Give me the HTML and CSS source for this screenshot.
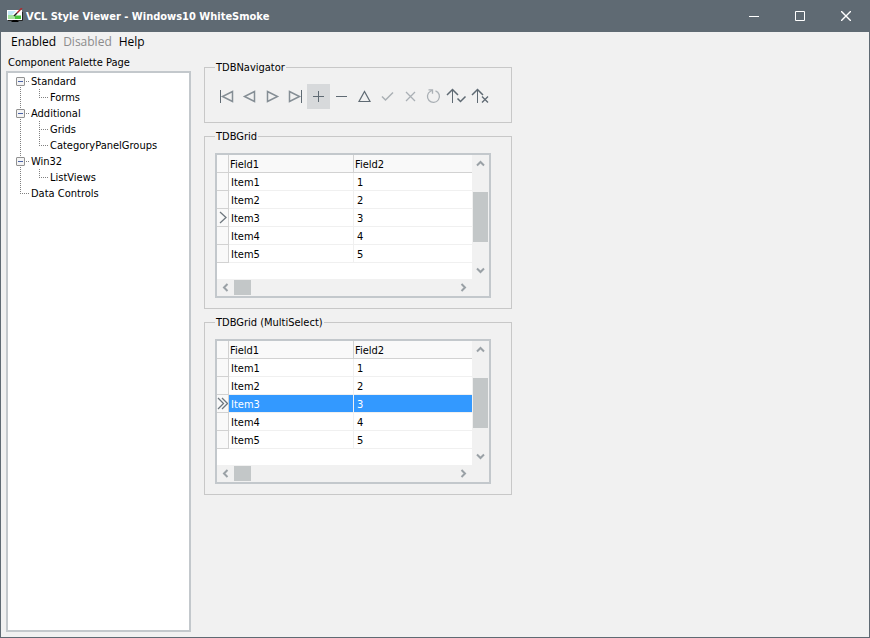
FILE: index.html
```html
<!DOCTYPE html>
<html lang="en">

<head>
    <meta charset="UTF-8">
    <meta name="viewport" content="width=device-width, initial-scale=1.0">
    <title>VCL Style Viewer - Windows10 WhiteSmoke</title>
    <link rel="stylesheet" href="styles.css">
</head>

<body>
    <div class="window">
        <header class="titlebar">
            <svg class="app-icon" width="16" height="16" viewBox="0 0 16 16">
                <path d="M0 2h15v10H0z" fill="#fff"/>
                <path d="M1 3h8L5 7H1z" fill="#c4e8f8"/>
                <path d="M1 7h13v4H1z" fill="#a5e39d"/>
                <path d="M8 8h6v3H8z" fill="#49c43d"/>
                <path d="M15.500 4v8.500H1" fill="none" stroke="#222"/>
                <path d="M6 12h4l2 2H4z" fill="#000"/>
                <path d="M10 5l5-5" stroke="#b3282d" stroke-width="1.500"/>
                <path d="M7 8l3-3" stroke="#222" stroke-width="1.500"/>
            </svg>
            <h1>VCL Style Viewer - Windows10 WhiteSmoke</h1>
            <div class="window-buttons">
                <button type="button" aria-label="Minimize"><svg width="10" height="10" viewBox="0 0 10 10"><path d="M0 5.500h10"/></svg></button>
                <button type="button" aria-label="Maximize"><svg width="10" height="10" viewBox="0 0 10 10"><path d="M.5.5h9v9h-9z"/></svg></button>
                <button type="button" aria-label="Close"><svg width="10" height="10" viewBox="0 0 10 10"><path stroke-width="1.400" d="M0 0l10 10M10 0L0 10"/></svg></button>
            </div>
        </header>

        <nav class="menu">
            <button type="button">Enabled</button>
            <button type="button" disabled>Disabled</button>
            <button type="button">Help</button>
        </nav>

        <main class="content">
            <section class="palette">
                <h2 id="palette-label">Component Palette Page</h2>
                <ul class="tree" aria-labelledby="palette-label">
                    <li>
                        <div class="node"><span class="branch"><button type="button" class="toggle" aria-label="Collapse Standard"></button></span>Standard</div>
                        <ul>
                            <li><div class="node"><span class="branch end"></span>Forms</div></li>
                        </ul>
                    </li>
                    <li>
                        <div class="node"><span class="branch"><button type="button" class="toggle" aria-label="Collapse Additional"></button></span>Additional</div>
                        <ul>
                            <li><div class="node"><span class="branch"></span>Grids</div></li>
                            <li><div class="node"><span class="branch end"></span>CategoryPanelGroups</div></li>
                        </ul>
                    </li>
                    <li>
                        <div class="node"><span class="branch"><button type="button" class="toggle" aria-label="Collapse Win32"></button></span>Win32</div>
                        <ul>
                            <li><div class="node"><span class="branch end"></span>ListViews</div></li>
                        </ul>
                    </li>
                    <li>
                        <div class="node"><span class="branch end"></span>Data Controls</div>
                    </li>
                </ul>
            </section>

            <section class="groups">
                <fieldset>
                    <legend>TDBNavigator</legend>
                    <div class="navigator">
                        <button type="button" aria-label="First"><svg viewBox="0 0 23 25"><path d="M5.500 6v13"/><path class="soft" d="M17.500 7.500v10l-10-5z"/></svg></button>
                        <button type="button" aria-label="Prior"><svg viewBox="0 0 23 25"><path class="soft" d="M16.500 7.500v10l-10-5z"/></svg></button>
                        <button type="button" aria-label="Next"><svg viewBox="0 0 23 25"><path class="soft" d="M6.500 7.500v10l10-5z"/></svg></button>
                        <button type="button" aria-label="Last"><svg viewBox="0 0 23 25"><path class="soft" d="M5.500 7.500v10l10-5z"/><path d="M17.500 6v13"/></svg></button>
                        <button type="button" aria-label="Insert" class="hot"><svg viewBox="0 0 23 25"><path d="M6 12.500h11M11.500 7v11"/></svg></button>
                        <button type="button" aria-label="Delete"><svg viewBox="0 0 23 25"><path d="M6 12.500h11"/></svg></button>
                        <button type="button" aria-label="Edit"><svg viewBox="0 0 23 25"><path stroke-width="1.200" d="M6 17.500h11l-5.500-10z"/></svg></button>
                        <button type="button" aria-label="Post" disabled><svg viewBox="0 0 23 25"><path stroke-width="1.500" d="M6 12.500l3.500 3.500L17 8.500"/></svg></button>
                        <button type="button" aria-label="Cancel" disabled><svg viewBox="0 0 23 25"><path stroke-width="1.300" d="M7 8l9 9M16 8l-9 9"/></svg></button>
                        <button type="button" aria-label="Refresh" disabled><svg viewBox="0 0 23 25"><path stroke-width="1.300" d="M13.500 6.800a6 6 0 1 1-5 .4l1.500-.7"/><path stroke-width="1.300" d="M6.500 5.800h4v4"/></svg></button>
                        <button type="button" aria-label="Apply updates"><svg viewBox="0 0 23 25"><path d="M7.500 6v13"/><path stroke-width="1.500" d="M2 11l5.500-5.500L13 11M12.500 14.500L15.500 17.500l5-5"/></svg></button>
                        <button type="button" aria-label="Cancel updates"><svg viewBox="0 0 23 25"><path d="M9.500 6v13"/><path stroke-width="1.500" d="M4 11l5.500-5.500L15 11"/><path stroke-width="1.300" d="M14 12.500l6 6M20 12.500l-6 6"/></svg></button>
                    </div>
                </fieldset>

                <fieldset>
                    <legend>TDBGrid</legend>
                    <div class="dbgrid">
                        <table>
                            <thead>
                                <tr><td class="indicator"></td><th class="field1">Field1</th><th>Field2</th></tr>
                            </thead>
                            <tbody>
                                <tr><td class="indicator"></td><td>Item1</td><td>1</td></tr>
                                <tr><td class="indicator"></td><td>Item2</td><td>2</td></tr>
                                <tr><td class="indicator"><svg width="11" height="17" viewBox="0 0 11 17"><path d="M3 3l6 5.500L3 14"/></svg></td><td>Item3</td><td>3</td></tr>
                                <tr><td class="indicator"></td><td>Item4</td><td>4</td></tr>
                                <tr><td class="indicator"></td><td>Item5</td><td>5</td></tr>
                            </tbody>
                        </table>
                        <div class="vscroll">
                            <button type="button" aria-label="Scroll up"><svg width="9" height="9" viewBox="0 0 9 9"><path d="M1 6.500L4.500 3 8 6.500"/></svg></button>
                            <div class="thumb"></div>
                            <button type="button" aria-label="Scroll down"><svg width="9" height="9" viewBox="0 0 9 9"><path d="M1 2.500L4.500 6 8 2.500"/></svg></button>
                        </div>
                        <div class="hscroll">
                            <button type="button" aria-label="Scroll left"><svg width="9" height="9" viewBox="0 0 9 9"><path d="M6.500 1L3 4.500 6.500 8"/></svg></button>
                            <div class="thumb"></div>
                            <button type="button" aria-label="Scroll right"><svg width="9" height="9" viewBox="0 0 9 9"><path d="M2.500 1L6 4.500 2.500 8"/></svg></button>
                        </div>
                    </div>
                </fieldset>

                <fieldset>
                    <legend>TDBGrid (MultiSelect)</legend>
                    <div class="dbgrid">
                        <table>
                            <thead>
                                <tr><td class="indicator"></td><th class="field1">Field1</th><th>Field2</th></tr>
                            </thead>
                            <tbody>
                                <tr><td class="indicator"></td><td>Item1</td><td>1</td></tr>
                                <tr><td class="indicator"></td><td>Item2</td><td>2</td></tr>
                                <tr class="selected"><td class="indicator"><svg width="11" height="17" viewBox="0 0 11 17"><path d="M1 3l5.500 5.500L1 14M5 3l5.500 5.500L5 14"/></svg></td><td>Item3</td><td>3</td></tr>
                                <tr><td class="indicator"></td><td>Item4</td><td>4</td></tr>
                                <tr><td class="indicator"></td><td>Item5</td><td>5</td></tr>
                            </tbody>
                        </table>
                        <div class="vscroll">
                            <button type="button" aria-label="Scroll up"><svg width="9" height="9" viewBox="0 0 9 9"><path d="M1 6.500L4.500 3 8 6.500"/></svg></button>
                            <div class="thumb"></div>
                            <button type="button" aria-label="Scroll down"><svg width="9" height="9" viewBox="0 0 9 9"><path d="M1 2.500L4.500 6 8 2.500"/></svg></button>
                        </div>
                        <div class="hscroll">
                            <button type="button" aria-label="Scroll left"><svg width="9" height="9" viewBox="0 0 9 9"><path d="M6.500 1L3 4.500 6.500 8"/></svg></button>
                            <div class="thumb"></div>
                            <button type="button" aria-label="Scroll right"><svg width="9" height="9" viewBox="0 0 9 9"><path d="M2.500 1L6 4.500 2.500 8"/></svg></button>
                        </div>
                    </div>
                </fieldset>
            </section>
        </main>
    </div>
</body>

</html>
```
FILE: styles.css
```css
* {
    box-sizing: border-box;
}

body {
    margin: 0;
    font-family: "DejaVu Sans Condensed", "DejaVu Sans", sans-serif;
    font-size: 11px;
    line-height: 16px;
    color: #000;
}

button {
    display: flex;
    align-items: center;
    justify-content: center;
    padding: 0;
    border: 0;
    background: none;
    font: inherit;
    color: inherit;
}

svg {
    fill: none;
    stroke-width: 1;
}

.window {
    display: flex;
    flex-direction: column;
    min-height: 100vh;
    border: 1px solid #5f6a73;
    border-top: 0;
    background: #f1f1f1;
}

/* title bar */
.titlebar {
    display: flex;
    align-items: center;
    height: 32px;
    padding-left: 6px;
    background: #5f6a73;
    color: #fff;
}

.titlebar h1 {
    flex: 1;
    margin: 0;
    padding: 2px 0 0 3px;
    font-size: 11px;
    font-weight: bold;
}

.window-buttons {
    display: flex;
}

.window-buttons button {
    width: 46px;
    height: 32px;
}

.window-buttons svg {
    stroke: #fff;
}

/* menu */
.menu {
    display: flex;
    gap: 7px;
    height: 20px;
    padding-left: 10px;
    font-family: "Open Sans", "Noto Sans", sans-serif;
    font-size: 12px;
}

.menu button:disabled {
    color: #8c8c8c;
}

.content {
    flex: 1;
    display: flex;
    gap: 13px;
    padding: 2px 5px 5px;
}

/* component tree */
.palette {
    display: flex;
    flex-direction: column;
    width: 185px;
}

.palette h2 {
    height: 17px;
    margin: 0;
    padding-left: 2px;
    font-size: 11px;
    font-weight: normal;
    line-height: 18px;
}

.tree {
    flex: 1;
    margin: 0;
    padding: 0 4px;
    border: 2px solid #c3c8cc;
    background: #fff;
    list-style: none;
}

.tree ul {
    margin: 0;
    padding-left: 19px;
    list-style: none;
    background: repeating-linear-gradient(to bottom, #808080 0 1px, transparent 1px 2px) 8px 0 / 1px 100% no-repeat;
}

.node {
    display: flex;
    height: 16px;
    line-height: 18px;
    white-space: nowrap;
}

.branch {
    width: 19px;
    padding: 4px 0 0 4px;
    background:
        repeating-linear-gradient(to bottom, #808080 0 1px, transparent 1px 2px) 8px 0 / 1px 16px no-repeat,
        repeating-linear-gradient(to right, #808080 0 1px, transparent 1px 2px) 8px 8px / 9px 1px no-repeat;
}

.branch.end {
    background-size: 1px 8px, 9px 1px;
}

.tree > li:first-child > .node .branch {
    background-position: 8px 8px, 8px 8px;
}

.toggle {
    width: 9px;
    height: 9px;
    border: 1px solid #919191;
    border-radius: 1px;
    background: linear-gradient(#4b63a7, #4b63a7) center / 5px 1px no-repeat, #f4f4f4;
}

/* group boxes */
.groups {
    display: flex;
    flex-direction: column;
    gap: 6px;
    width: 308px;
    padding-top: 6px;
}

fieldset {
    margin: 0;
    padding: 9px 20px 10px 10px;
    border: 1px solid #c8c8c8;
}

legend {
    padding: 0 1px;
    line-height: 15px;
}

.navigator {
    display: grid;
    grid-template-columns: repeat(12, 1fr);
    padding-bottom: 3px;
}

.navigator button {
    height: 25px;
}

.navigator svg {
    width: 23px;
    height: 25px;
    stroke: #5f6a73;
}

.navigator .soft {
    stroke: #858e95;
    stroke-width: 1.5;
}

.navigator button:disabled svg {
    stroke: #aab0b5;
}

.navigator .hot {
    background: #d7d9db;
}

/* data grid */
.dbgrid {
    display: grid;
    grid-template-columns: 1fr 17px;
    grid-template-rows: 124px 17px;
    border: 2px solid #c3c8cc;
    background: #fff;
}

table {
    width: 100%;
    align-self: start;
    border-collapse: separate;
    border-spacing: 0;
    table-layout: fixed;
}

th,
td {
    height: 18px;
    padding: 2px 0 0 2px;
    border-bottom: 1px solid #f0f0f0;
    line-height: 15px;
    text-align: left;
    font-weight: normal;
}

td:last-child {
    padding-left: 3px;
}

thead th,
thead td,
td.indicator {
    border-bottom-color: #d2d2d2;
    background: #f9f9f9;
}

th {
    padding-left: 1px;
}

th.field1 {
    width: 125px;
    border-right: 1px solid #d2d2d2;
}

td:nth-child(2) {
    border-right: 1px solid #f0f0f0;
}

td.indicator {
    width: 12px;
    padding: 0;
    border-right: 1px solid #d2d2d2;
}

.indicator svg {
    display: block;
    stroke: #6e777e;
    stroke-width: 1.3;
}

.selected td:not(.indicator) {
    background: #3399ff;
    color: #fff;
}

.vscroll,
.hscroll {
    display: flex;
    background: #f1f1f1;
}

.vscroll {
    flex-direction: column;
}

.hscroll {
    grid-column: 1 / 3;
    padding-right: 17px;
}

.vscroll button,
.hscroll button {
    width: 17px;
    height: 17px;
}

.vscroll button:last-child {
    margin-top: auto;
}

.hscroll button:last-child {
    margin-left: auto;
}

.vscroll svg,
.hscroll svg {
    stroke: #9aa1a6;
    stroke-width: 2;
}

.thumb {
    background: #c3c7c8;
}

.vscroll .thumb {
    height: 50px;
    margin: 20px 1px 0;
}

.hscroll .thumb {
    width: 17px;
    margin: 1px 0;
}
```
